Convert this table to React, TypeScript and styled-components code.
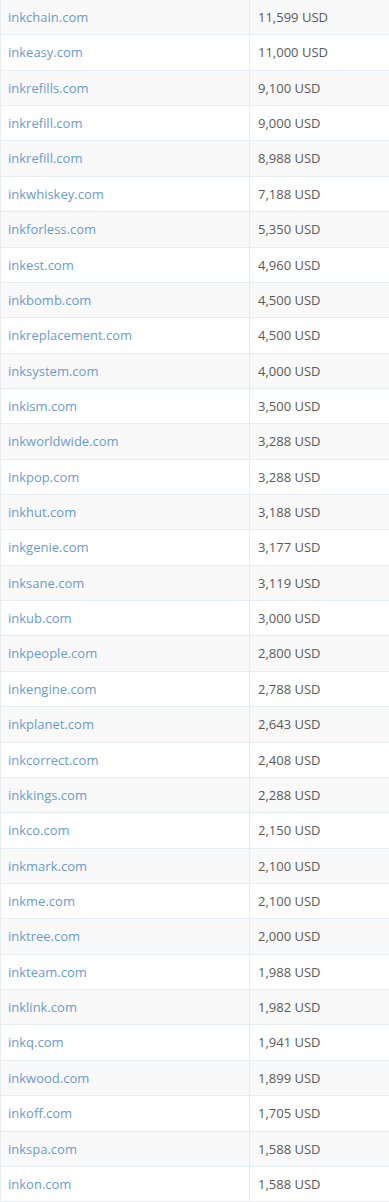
import React from 'react';
import styled, { createGlobalStyle } from 'styled-components';

const GlobalStyle = createGlobalStyle`
  body {
    margin: 0;
    background: #ffffff;
    font-family: "Open Sans", "Liberation Sans", sans-serif;
  }
`;

const Table = styled.table`
  width: 389px;
  table-layout: fixed;
  border-collapse: collapse;
  border-spacing: 0;
  font-size: 13px;
  color: #5a5a5a;
`;

const Row = styled.tr<{ striped: boolean }>`
  background-color: ${({ striped }) => (striped ? '#f9f9f9' : '#ffffff')};
`;

const Cell = styled.td`
  padding: 8px;
  line-height: 18.36px;
  border-bottom: 1px solid #e7ecf1;
  border-left: 1px solid #e7ecf1;
  vertical-align: top;
  white-space: nowrap;
`;

const NameCell = styled(Cell)`
  padding-left: 7px;
`;

const DomainLink = styled.a`
  color: #6a9bd3;
  text-decoration: none;
`;

const rows: [string, string][] = [
  ['inkchain.com', '11,599 USD'],
  ['inkeasy.com', '11,000 USD'],
  ['inkrefills.com', '9,100 USD'],
  ['inkrefill.com', '9,000 USD'],
  ['inkrefill.com', '8,988 USD'],
  ['inkwhiskey.com', '7,188 USD'],
  ['inkforless.com', '5,350 USD'],
  ['inkest.com', '4,960 USD'],
  ['inkbomb.com', '4,500 USD'],
  ['inkreplacement.com', '4,500 USD'],
  ['inksystem.com', '4,000 USD'],
  ['inkism.com', '3,500 USD'],
  ['inkworldwide.com', '3,288 USD'],
  ['inkpop.com', '3,288 USD'],
  ['inkhut.com', '3,188 USD'],
  ['inkgenie.com', '3,177 USD'],
  ['inksane.com', '3,119 USD'],
  ['inkub.com', '3,000 USD'],
  ['inkpeople.com', '2,800 USD'],
  ['inkengine.com', '2,788 USD'],
  ['inkplanet.com', '2,643 USD'],
  ['inkcorrect.com', '2,408 USD'],
  ['inkkings.com', '2,288 USD'],
  ['inkco.com', '2,150 USD'],
  ['inkmark.com', '2,100 USD'],
  ['inkme.com', '2,100 USD'],
  ['inktree.com', '2,000 USD'],
  ['inkteam.com', '1,988 USD'],
  ['inklink.com', '1,982 USD'],
  ['inkq.com', '1,941 USD'],
  ['inkwood.com', '1,899 USD'],
  ['inkoff.com', '1,705 USD'],
  ['inkspa.com', '1,588 USD'],
  ['inkon.com', '1,588 USD'],
];

const App: React.FC = () => {
  return (
    <>
      <GlobalStyle />
      <Table>
        <colgroup>
          <col style={{ width: 249 }} />
          <col />
        </colgroup>
        <tbody>
          {rows.map(([name, price], i) => (
            <Row key={i} striped={i % 2 === 0}>
              <NameCell>
                <DomainLink href="#">{name}</DomainLink>
              </NameCell>
              <Cell>{price}</Cell>
            </Row>
          ))}
        </tbody>
      </Table>
    </>
  );
};

export default App;
